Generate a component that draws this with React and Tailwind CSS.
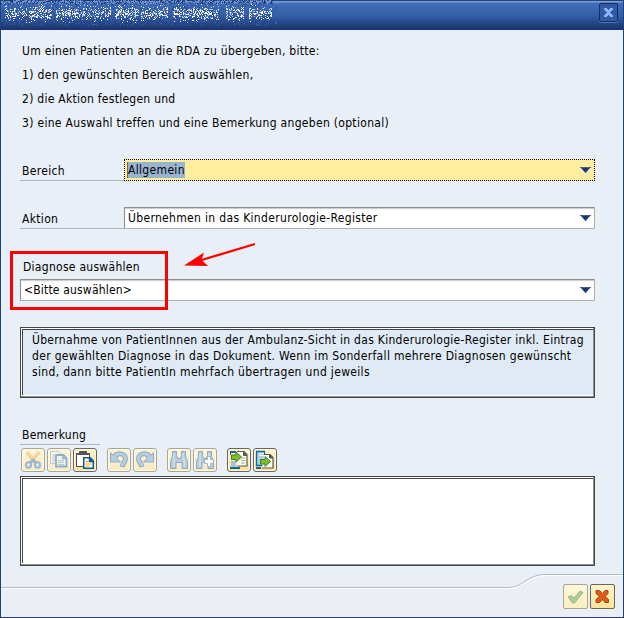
import React from 'react';

// small seeded generator, keeps the scrambled caption stable between renders
const seeded = (seed) => () => {
  seed = (seed + 0x6d2b79f5) | 0;
  let t = Math.imul(seed ^ (seed >>> 15), 1 | seed);
  t = (t + Math.imul(t ^ (t >>> 7), 61 | t)) ^ t;
  return ((t ^ (t >>> 14)) >>> 0) / 4294967296;
};

const WORDS = [[5, 26], [29, 51], [56, 110], [115, 138], [141, 167], [173, 218], [226, 243], [249, 271]];
const BRIGHT = ['#ffffff', '#ffffff', '#dfefff', '#ffffff', '#a9cdf8', '#e9a9b4', '#7fc8f5', '#f6e3d0'];

const makeNoise = () => {
  const rnd = seeded(71);
  const dots = [];
  for (let y = 0; y < 28; y++) {
    for (let x = 1; x < 278; x++) {
      const r = rnd();
      const pick = rnd();
      if (y < 4) {
        if (r < 0.7) dots.push([x, y, pick < 0.4 ? '#7193d2' : pick < 0.7 ? '#1f3a70' : '#3c64ac']);
        continue;
      }
      const word = WORDS.some(([a, b]) => x >= a && x <= b);
      const density = Math.max(0, 0.46 * Math.exp(-(((y - 13) / 5.5) ** 2)));
      if (word && r < density && y < 23) dots.push([x, y, BRIGHT[Math.floor(pick * 8)]]);
      else if (r > 0.78 && y < 26) dots.push([x, y, pick < 0.5 ? '#294d92' : '#365da5']);
    }
  }
  return dots;
};

const NOISE = makeNoise();

const TitleBar = () => (
  <div className="relative flex h-[30px] shrink-0 items-start justify-between border-t border-[#20427c] bg-[linear-gradient(#7d9dd6_0,#7d9dd6_1px,#406dba_2px,#3460a8_14px,#27498c_21px,#1a3268_29px)]">
    <svg width="280" height="28" className="-mt-px -ml-px" shapeRendering="crispEdges">
      {NOISE.map(([x, y, c], i) => <rect key={i} x={x} y={y} width="1" height="1" fill={c} />)}
    </svg>
    <button className="mt-[2px] mr-[5px] flex h-[19px] w-[19px] items-center justify-center rounded-[2px] border border-[#152c61] bg-[#315ba4] shadow-[0_1px_0_#5277b6]">
      <svg width="11" height="11" viewBox="0 0 11 11" shapeRendering="crispEdges">
        <path d="M1 1h3v1h1v1h1v-1h1v-1h3v2h-1v1h-1v1h-1v1h1v1h1v1h1v2h-3v-1h-1v-1h-1v1h-1v1h-3v-2h1v-1h1v-1h1v-1h-1v-1h-1v-1h-1z" fill="#8cb4ff" />
      </svg>
    </button>
  </div>
);

const Arrow = ({ halo }) => (
  <svg width="13" height="9" viewBox="0 0 13 9" className="mr-[2px] shrink-0">
    {halo && <path d="M1 2h11v2L6.500 8.500L1 4z" fill="#fff7d4" />}
    <path d="M1 1h11L6.500 7.500z" fill="#6f86ab" />
    <path d="M2 1.500h9L6.500 6.500z" fill="#1d3564" />
    <path d="M1 1.500h11" stroke="#4d5d73" />
  </svg>
);

const Combo = ({ children, className = '' }) => (
  <div className={`flex h-[22px] items-center justify-between border border-t-[#8e8e8e] border-r-[#b0b0b0] border-b-[#b0b0b0] border-l-[#8e8e8e] bg-white pl-[3px] shadow-[inset_0_1px_1px_#c9c9c9] ${className}`}>
    <span className="whitespace-nowrap">{children}</span>
    <Arrow />
  </div>
);

const FieldLabel = ({ children }) => (
  <div className="h-[22px] w-[104px] border-b border-[#b2b6ba] pt-px pl-[2px] leading-[23px]">{children}</div>
);

// sunken frame: dark outer line, dark inner line on the top and left only
const Frame = ({ children, className }) => (
  <div className={`border border-[#454545] bg-white p-px shadow-[inset_-1px_-1px_0_#8f8f8f] ${className}`}>
    {children}
  </div>
);

const ToolButton = ({ children, off, className = '' }) => (
  <button className={`flex h-[24px] w-[24px] items-center justify-center rounded-[3px] border shadow-[inset_0_0_0_1px_#fffbe5] ${off ? 'border-[#aaa693] bg-[linear-gradient(#fcf5de,#f8e9c2)]' : 'border-[#6b6758] bg-[linear-gradient(#fff5cf,#f9df92)]'} ${className}`}>
    <svg width="20" height="20" viewBox="0 0 20 20" fill="none" className="shrink-0">{children}</svg>
  </button>
);

const Cut = () => (
  <>
    <path d="M4 2l8 10M16 2L8 12" stroke="#f2c382" strokeWidth="3.400" />
    <path d="M4.500 2l8 10M15.500 2L7.500 12" stroke="#fae0ae" strokeWidth="1.400" />
    <path d="M6 14l4-4 4 4" stroke="#9db8cc" strokeWidth="3" />
    <ellipse cx="5.500" cy="15" rx="2.600" ry="2.800" fill="#e6edec" stroke="#9db8cc" strokeWidth="2" />
    <ellipse cx="14.500" cy="15" rx="2.600" ry="2.800" fill="#e6edec" stroke="#9db8cc" strokeWidth="2" />
  </>
);

const Copy = () => (
  <>
    <path d="M1.500 1.500h8l2 2v10h-10z" fill="#f8f5e9" stroke="#c3c9c5" />
    <path d="M3 5h5M3 7h4M3 9h4M3 11h4" stroke="#b5c6d1" />
    <path d="M7 5h7.500l3 3v8.500H7z" fill="#edf2ec" stroke="#8bb0c9" strokeWidth="1.800" />
    <path d="M14 4.500v4h4" stroke="#8bb0c9" strokeWidth="1.500" />
    <path d="M9 10.500h6M9 12.500h6M9 14.500h6" stroke="#b4c8d2" />
  </>
);

const Paste = () => (
  <>
    <path d="M1.500 3.500h13v13h-13z" fill="#fffef8" stroke="#4b4b4b" />
    <path d="M4 1h8v4H4z" fill="#55565a" />
    <path d="M1 3h14v2H1z" fill="#55565a" />
    <path d="M8.750 7.750h6.500l3 3v7.500h-9.500z" fill="#fff" stroke="#145a91" strokeWidth="1.500" />
    <path d="M14.500 7.500v4h4" fill="#145a91" stroke="#145a91" strokeWidth="1.500" />
    <path d="M10.500 11.500h3M10.500 14h6M10.500 16h4" stroke="#f0ad18" />
  </>
);

const Undo = () => (
  <>
    <path d="M5 7C8 2 17 3 16.500 9C16.200 12 14 13 13 17" stroke="#95aebd" strokeWidth="5" />
    <path d="M1.500 2.500v9.500h10l-3.500-3.500 1-2.500-3.500 1z" fill="#b5cee1" stroke="#95aebd" />
    <path d="M5 7C8 2 17 3 16.500 9C16.200 12 14 13 13 16" stroke="#b5cee1" strokeWidth="3" />
  </>
);

const Finder = () => (
  <>
    <path d="M3.500 1.500h4v4l1 3h3l1-3v-4h4v5l2 5v7h-5.500v-6h-6v6H1.500v-7l2-5z" fill="#b5ccde" stroke="#90abc0" />
    <path d="M5 3v14M14 3v4l1.500 4v6" stroke="#d2dfe6" strokeWidth="1.500" />
  </>
);

const FinderNext = () => (
  <>
    <Finder />
    <path d="M12.500 6.500h3v3h3v4h-3v3h-3v-3h-3v-4h3z" fill="#fff" stroke="#a4b6c4" />
  </>
);

const GreenArrow = ({ x, y }) => (
  <path transform={`translate(${x} ${y})`} d="M0.500 3h4.500v-3l5.500 5-5.500 5V7.500h-4.500z" fill="#7bbf2c" stroke="#438026" />
);

const Import = () => (
  <>
    <path d="M8 1.500h7l3 3v11.500H8" fill="#fffef5" stroke="#54585a" strokeWidth="1.200" />
    <path d="M14.500 1.500v4H18" fill="#54585a" stroke="#54585a" />
    <path d="M12 8h4M12 10.500h4M12 13h4" stroke="#a0a29d" />
    <path d="M1 1h6v2H2v2H1zM1 17h10v2H1z" fill="#17659b" />
    <path d="M2 11h5v6H2z" fill="#a5c4d8" />
    <GreenArrow x={2} y={2} />
  </>
);

const Export = () => (
  <>
    <path d="M1.500 1.500h8v14h-8z" fill="#acd0e8" stroke="#17659b" strokeWidth="1.300" />
    <path d="M4 3.500h5M4 5.500h5" stroke="#f4fafb" />
    <path d="M9 4.500h6l3 3v10.500H7" fill="#fffef5" stroke="#54585a" strokeWidth="1.200" />
    <path d="M14.500 4v4H18" fill="#54585a" stroke="#54585a" />
    <path d="M1 17h5v2H1z" fill="#17659b" />
    <GreenArrow x={5} y={6.500} />
  </>
);

const Toolbar = () => (
  <div className="mt-[3px] ml-px flex gap-[2px]">
    <ToolButton off><Cut /></ToolButton>
    <ToolButton off><Copy /></ToolButton>
    <ToolButton><Paste /></ToolButton>
    <ToolButton off className="ml-2"><Undo /></ToolButton>
    <ToolButton off><g transform="translate(20 0) scale(-1 1)"><Undo /></g></ToolButton>
    <ToolButton off className="ml-2"><Finder /></ToolButton>
    <ToolButton off><FinderNext /></ToolButton>
    <ToolButton className="ml-2"><Import /></ToolButton>
    <ToolButton><Export /></ToolButton>
  </div>
);

const Footer = () => (
  <div className="relative flex h-[44px] shrink-0 justify-end gap-[2px] pt-[11px] pr-[8px]">
    <svg width="622" height="44" viewBox="0 8 622 44" className="absolute bottom-0 left-0">
      <rect y="8" width="622" height="44" fill="#ebeef3" />
      <path d="M0 22.500H508C522 22.500 526 9.500 544 9.500H622" stroke="#afb9d2" fill="none" />
      <path d="M0 23.500H509C523 23.500 527 10.500 545 10.500H622" stroke="#fff" fill="none" />
    </svg>
    <button className="relative flex h-[25px] w-[25px] items-center justify-center rounded-[2px] border border-[#aaa693] bg-[linear-gradient(#fdf6dc,#fbefbe)]">
      <svg width="17" height="16" viewBox="0 0 17 16">
        <path d="M1 8l3-1.500 3 2.500 6-7 3 1.500-8.500 10.500H5.500z" fill="#a9d08f" stroke="#9fb3a2" />
      </svg>
    </button>
    <button className="relative flex h-[25px] w-[25px] items-center justify-center rounded-[2px] border border-[#68655b] bg-[linear-gradient(#fff5cf,#fae497)]">
      <svg width="15" height="15" viewBox="0 0 15 15">
        <path d="M1 1.500h3.500l3 3 2.500-3h3v3L10 7.500l3.500 3v3H10l-2.500-3-3 3H1v-3l3.500-3L1 4.500z" fill="#e25a14" stroke="#a5431c" />
      </svg>
    </button>
  </div>
);

export default function App() {
  return (
    <div className="flex h-[618px] w-[624px] flex-col border-x border-b border-[#20427c] bg-[#e8eff6] font-['DejaVu_Sans_Condensed','DejaVu_Sans',sans-serif] text-[12px] tracking-[0.33px] text-black [font-stretch:condensed]">
      <TitleBar />
      <main className="relative flex grow flex-col pr-[28px] pl-[19px]">
        <div className="mt-[9px] pl-[2px] leading-[24px] whitespace-nowrap">
          <p className="tracking-[0.3px]">Um einen Patienten an die RDA zu übergeben, bitte:</p>
          <p>1) den gewünschten Bereich auswählen,</p>
          <p className="tracking-[0.26px]">2) die Aktion festlegen und</p>
          <p className="tracking-[0.31px]">3) eine Auswahl treffen und eine Bemerkung angeben (optional)</p>
        </div>

        <div className="mt-[24px] flex">
          <FieldLabel>Bereich</FieldLabel>
          <div className="flex h-[22px] grow items-center justify-between border border-dotted border-black bg-[#ffee9e] pl-[2px]">
            <span className="border-l border-[#806040] bg-[#99b4d1] leading-[16px] tracking-[0.33px]">Allgemein</span>
            <Arrow halo />
          </div>
        </div>

        <div className="mt-[26px] flex">
          <FieldLabel>Aktion</FieldLabel>
          <Combo className="grow">Übernehmen in das Kinderurologie-Register</Combo>
        </div>

        <div className="mt-[28px] h-[22px] pl-[3px] leading-[20px] tracking-[0.28px]">Diagnose auswählen</div>
        <Combo className="tracking-[0.18px]">&lt;Bitte auswählen&gt;</Combo>

        <Frame className="mt-[26px] h-[71px]">
          <div className="h-[66px] border-t border-l border-[#454545] bg-[#dfeaf4] pt-[2px] pl-[9px] leading-[16px] whitespace-nowrap">
            <p className="tracking-[0.3px]">Übernahme von PatientInnen aus der Ambulanz-Sicht in das Kinderurologie-Register inkl. Eintrag</p>
            <p>der gewählten Diagnose in das Dokument. Wenn im Sonderfall mehrere Diagnosen gewünscht</p>
            <p>sind, dann bitte PatientIn mehrfach übertragen und jeweils</p>
          </div>
        </Frame>

        <div className="mt-[27px] h-[20px] w-[80px] border-b border-[#b2b6ba] pl-[2px] leading-[20px] tracking-[0.22px]">Bemerkung</div>
        <Toolbar />
        <Frame className="mt-[4px] h-[90px]">
          <textarea className="block h-[85px] w-full resize-none border-t border-l border-[#454545] bg-white outline-none" />
        </Frame>

        {/* highlight around the diagnosis field */}
        <div className="absolute top-[221px] left-[9px] h-[59px] w-[158px] border-[3px] border-[#fe0000]" />
        <svg width="76" height="28" viewBox="0 0 76 28" className="absolute top-[210px] left-[181px]">
          <path d="M18 20.500L73 4" stroke="#f00" strokeWidth="2.300" />
          <path d="M2 25.500L22 12.500L19.500 20L26 26z" fill="#f00" />
        </svg>
      </main>
      <Footer />
    </div>
  );
}
